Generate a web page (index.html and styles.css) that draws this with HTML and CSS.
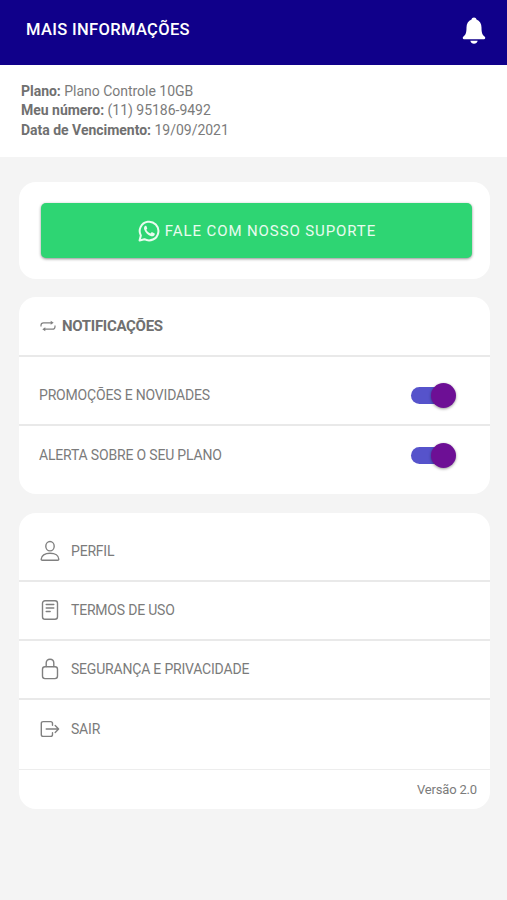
FILE: index.html
```html
<!DOCTYPE html>
<html lang="pt-BR">
<head>
<meta charset="utf-8">
<title>Mais informações</title>
<link rel="stylesheet" href="styles.css">
</head>
<body>
<header class="topbar">
  <h1>MAIS INFORMAÇÕES</h1>
  <svg class="bell" viewBox="0 0 24 28" fill="#fff"><path d="M12 .6c-1.400 0-2.300.9-2.500 2C6.300 3.700 4.500 6.700 4.500 10.500c0 5.200-.9 7.500-3.300 9.300C.3 20.600.8 22.300 2 22.300h20c1.200 0 1.700-1.700.8-2.500-2.400-1.800-3.300-4.100-3.300-9.300 0-3.800-1.800-6.800-5-7.900-.2-1.100-1.100-2-2.500-2zM8.300 23.700h7.400c-.5 1.900-1.900 3-3.700 3s-3.200-1.100-3.700-3z"/></svg>
</header>
<section class="summary">
  <p><b>Plano:</b> Plano Controle 10GB</p>
  <p><b>Meu número:</b> (11) 95186-9492</p>
  <p><b>Data de Vencimento:</b> 19/09/2021</p>
</section>
<main>
  <section class="card support">
    <button class="cta">
      <svg class="wa" viewBox="0 0 24 24" fill="none" stroke="#e9fbef"><path stroke-width="2.200" stroke-linejoin="round" d="M1.700 22.300l1.400-5.400A10.200 10.200 0 1 1 7 20.900z"/><path fill="#e9fbef" stroke="none" d="M8.200 6.300c-1.500.6-2 2.300-1.400 4 1.200 3.500 4.100 6.400 7.700 7.400 1.800.5 3.400-.4 3.800-2.200.1-.6-.1-.9-.6-1.100l-2.100-1c-.5-.2-.8-.1-1.100.3l-.9 1.100c-2-.8-3.600-2.300-4.500-4.100l.8-1.100c.2-.3.2-.6.100-.9l-.9-2.100c-.1-.3-.4-.4-.9-.3z"/></svg>
      <span>FALE COM NOSSO SUPORTE</span>
    </button>
  </section>
  <section class="card">
    <div class="card-head">
      <svg class="repeat" viewBox="0 0 16 12"><path d="M1 6.500V5.300C1 3.700 2 2.800 3.500 2.800H12M15 5.500v1.200c0 1.600-1 2.500-2.500 2.500H4"/><path class="fill" d="M10.700.8l3 2-3 2zM5.300 7.200l-3 2 3 2z"/></svg>
      <h2>NOTIFICAÇÕES</h2>
    </div>
    <div class="row first"><span>PROMOÇÕES E NOVIDADES</span><i class="switch"></i></div>
    <div class="row last"><span>ALERTA SOBRE O SEU PLANO</span><i class="switch"></i></div>
  </section>
  <section class="card menu">
    <a class="item top"><svg viewBox="0 0 20 22"><ellipse cx="10" cy="6.200" rx="4.200" ry="4.700"/><path d="M1.200 19.200c0-3.700 3.700-6 8.800-6s8.800 2.300 8.800 6c0 .7-.4 1.100-1.100 1.100H2.300c-.7 0-1.100-.4-1.100-1.100z"/></svg><span>PERFIL</span></a>
    <a class="item"><svg viewBox="0 0 20 22"><rect x="2.500" y="1.700" width="15" height="18.600" rx="2.500"/><path d="M6.200 5.500h7.600M6.200 9h7.600M6.200 12.500h4"/></svg><span>TERMOS DE USO</span></a>
    <a class="item"><svg viewBox="0 0 20 22"><rect x="2.500" y="8.700" width="15" height="11.900" rx="2.500"/><path d="M6.200 8.500V5c0-2.300 1.500-3.800 3.800-3.800S13.800 2.700 13.800 5v3.500"/></svg><span>SEGURANÇA E PRIVACIDADE</span></a>
    <a class="item exit"><svg viewBox="0 0 20 22"><path d="M12.500 7.300V5.500c0-1.200-.7-1.900-1.900-1.900H3.200c-1.200 0-1.900.7-1.900 1.900v11c0 1.200.7 1.900 1.900 1.900h7.400c1.200 0 1.900-.7 1.900-1.900v-1.800M6.200 11h12.300M15.200 7.600l3.400 3.400-3.400 3.400"/></svg><span>SAIR</span></a>
    <div class="version">Versão 2.0</div>
  </section>
</main>
</body>
</html>
```
FILE: styles.css
```css
* { box-sizing: border-box; }
body { margin: 0; min-height: 900px; background: #f4f4f4; color: #7b7b7b; font-family: Roboto, "Liberation Sans", sans-serif; }
h1, h2, p { margin: 0; }
.topbar { height: 65px; padding: 0 21px 5px 26px; display: flex; align-items: center; justify-content: space-between; background: #10008a; color: #fff; }
h1 { font-size: 16.5px; font-weight: 500; line-height: 20px; letter-spacing: .35px; }
.bell { width: 24px; height: 28px; margin-top: 2px; }
.summary { height: 92px; padding: 16.500px 21px; background: #fff; font-size: 14px; line-height: 19.500px; letter-spacing: -.02px; }
.summary p { white-space: nowrap; }
.summary b { color: #707070; font-weight: 700; }
main { padding: 25px 17px 0 19px; display: flex; flex-direction: column; gap: 18px; }
.card { background: #fff; border-radius: 17px; }
.support { height: 97px; padding: 21px 18px 20px 22px; }
.cta { width: 100%; height: 55px; padding: 0 0 0 1px; border: 0; border-radius: 5px; display: flex; align-items: center; justify-content: center; gap: 5px; background: #2ed573; color: #e9fbef; font: 400 15px Roboto, sans-serif; letter-spacing: .9px; box-shadow: 0 1px 3px rgba(0,0,0,.45); }
.wa { width: 22px; height: 22px; }
.card-head { height: 60px; padding-left: 21px; display: flex; align-items: center; gap: 6px; border-bottom: 2px solid #e9e9e9; }
h2 { font-size: 15px; line-height: 20px; font-weight: 700; color: #707070; letter-spacing: -.3px; }
.repeat { width: 16px; height: 12px; fill: none; stroke: #808080; stroke-width: 1.200; }
.repeat .fill { fill: #808080; stroke: none; }
.row { padding: 0 34px 0 20px; display: flex; align-items: center; justify-content: space-between; font-size: 14px; letter-spacing: -.18px; }
.first { height: 69px; padding-top: 9px; border-bottom: 2px solid #e9e9e9; }
.last { height: 68px; padding-bottom: 10px; }
.switch { position: relative; width: 45px; height: 17px; border-radius: 9px; background: linear-gradient(90deg, #5653cb 34px, transparent 34px); }
.switch::after { content: ""; position: absolute; right: 0; top: -4px; width: 25px; height: 25px; border-radius: 50%; background: #6d0f95; box-shadow: 0 1px 3px rgba(0,0,0,.4); }
.menu { margin-top: 1px; }
.item { height: 59px; padding: 0 0 2px 21px; display: flex; align-items: center; gap: 11px; border-bottom: 2px solid #e9e9e9; font-size: 14px; letter-spacing: -.2px; }
.item svg { width: 20px; height: 22px; fill: none; stroke: #808080; stroke-width: 1.400; stroke-linecap: round; stroke-linejoin: round; }
.top { height: 69px; padding-top: 11px; }
.exit { height: 70px; padding-bottom: 11px; border-bottom: 1px solid #ededed; }
.version { height: 39px; display: flex; align-items: center; justify-content: flex-end; padding-right: 13px; font-size: 13px; letter-spacing: -.18px; }
```
